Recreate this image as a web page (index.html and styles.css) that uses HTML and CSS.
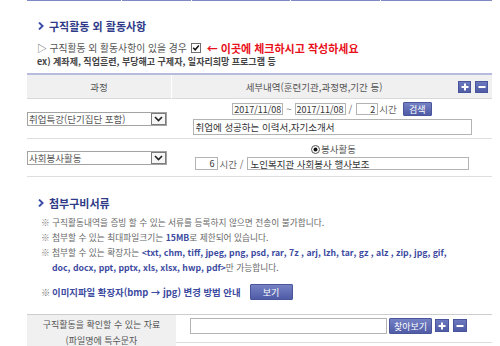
FILE: index.html
```html
<!DOCTYPE html>
<html lang="ko">
<head>
<meta charset="utf-8">
<title>구직활동 외 활동사항</title>
<link rel="stylesheet" href="styles.css">
</head>
<body>
<div class="page">
  <div class="prevbar"><span class="pb1"></span><span class="pb2"></span><span class="pb3"></span><span class="pb4"></span><span class="pb5"></span></div>

  <h2 class="title"><svg class="chev" width="6" height="8" viewBox="0 0 6 8"><path d="M1 0.6 L4.6 4 L1 7.4" fill="none" stroke="#3c4ea6" stroke-width="2"/></svg>구직활동 외 활동사항</h2>
  <p class="check-line">▷ 구직활동 외 활동사항이 있을 경우<svg class="cb" width="10" height="10" viewBox="0 0 10 10"><rect x="0.5" y="0.5" width="9" height="9" fill="#fff" stroke="#6f6f6f"/><path d="M2.2 4.8 L4.2 6.8 L7.8 2.6" fill="none" stroke="#111" stroke-width="1.5"/></svg><span class="red">← 이곳에 체크하시고 작성하세요</span></p>
  <p class="ex">ex) 계좌제, 직업훈련, 부당해고 구제자, 일자리희망 프로그램 등</p>

  <div class="act-table">
    <div class="th th-left">과정</div>
    <div class="th th-right">
      <span class="th-text">세부내역(훈련기관,과정명,기간 등)</span>
      <span class="pm">
        <span class="sq"><svg width="8" height="8" viewBox="0 0 8 8"><path d="M4 0.5 V7.5 M0.5 4 H7.5" stroke="#fff" stroke-width="2"/></svg></span>
        <span class="sq"><svg width="8" height="8" viewBox="0 0 8 8"><path d="M0.5 4 H7.5" stroke="#fff" stroke-width="2"/></svg></span>
      </span>
    </div>

    <div class="td td-left row1">
      <div class="sel"><span class="sel-text">취업특강(단기집단 포함)</span><span class="sel-btn"><svg width="9" height="6" viewBox="0 0 9 6"><path d="M1 1 L4.5 4.5 L8 1" fill="none" stroke="#222" stroke-width="1.6"/></svg></span></div>
    </div>
    <div class="td td-right row1">
      <div class="line-a">
        <input class="inp date" type="text" value="2017/11/08">
        <span class="tilde">~</span>
        <input class="inp date" type="text" value="2017/11/08">
        <span class="slash">/</span>
        <input class="inp hours" type="text" value="2">
        <span class="unit">시간</span>
        <span class="btn btn-search">검색</span>
      </div>
      <input class="inp wide" type="text" value="취업에 성공하는 이력서,자기소개서">
    </div>

    <div class="td td-left row2">
      <div class="sel"><span class="sel-text">사회봉사활동</span><span class="sel-btn"><svg width="9" height="6" viewBox="0 0 9 6"><path d="M1 1 L4.5 4.5 L8 1" fill="none" stroke="#222" stroke-width="1.6"/></svg></span></div>
    </div>
    <div class="td td-right row2">
      <div class="radio-line"><svg class="radio" width="9" height="9" viewBox="0 0 9 9"><circle cx="4.5" cy="4.5" r="4" fill="#fff" stroke="#555"/><circle cx="4.5" cy="4.5" r="2" fill="#111"/></svg><span>봉사활동</span></div>
      <div class="line-b">
        <input class="inp hrs2" type="text" value="6">
        <span class="unit2">시간 /</span>
        <input class="inp desc" type="text" value="노인복지관 사회봉사 행사보조">
      </div>
    </div>
  </div>

  <h2 class="title title2"><svg class="chev" width="6" height="8" viewBox="0 0 6 8"><path d="M1 0.6 L4.6 4 L1 7.4" fill="none" stroke="#3c4ea6" stroke-width="2"/></svg>첨부구비서류</h2>
  <ul class="notes">
    <li><span class="mark">※</span><span>구직활동내역을 증빙 할 수 있는 서류를 등록하지 않으면 전송이 불가합니다.</span></li>
    <li><span class="mark">※</span><span>첨부할 수 있는 최대파일크기는 <b class="blue">15MB</b>로 제한되어 있습니다.</span></li>
    <li><span class="mark">※</span><span>첨부할 수 있는 확장자는 <b class="blue">&lt;txt, chm, tiff, jpeg, png, psd, rar, 7z , arj, lzh, tar, gz , alz , zip, jpg, gif,</b></span></li>
    <li class="cont"><span><b class="blue">doc, docx, ppt, pptx, xls, xlsx, hwp, pdf&gt;</b>만 가능합니다.</span></li>
  </ul>
  <div class="guide"><span class="mark">※</span><b class="blue">이미지파일 확장자(bmp → jpg) 변경 방법 안내</b><span class="btn btn-view">보기</span></div>

  <div class="file-table">
    <div class="ft-left">구직활동을 확인할 수 있는 자료<br>(파일명에 특수문자</div>
    <div class="ft-right">
      <div class="ft-row">
        <input class="inp file" type="text" value="">
        <span class="btn btn-find">찾아보기</span>
        <span class="sq sq-big"><svg width="8" height="8" viewBox="0 0 8 8"><path d="M4 0.5 V7.5 M0.5 4 H7.5" stroke="#fff" stroke-width="2"/></svg></span>
        <span class="sq sq-big"><svg width="8" height="8" viewBox="0 0 8 8"><path d="M0.5 4 H7.5" stroke="#fff" stroke-width="2"/></svg></span>
      </div>
    </div>
  </div>
</div>
</body>
</html>
```
FILE: styles.css
```css
* { box-sizing: border-box; }
html, body { margin: 0; padding: 0; background: #fff; }
body {
  font-family: "Noto Sans CJK KR", "Noto Sans", sans-serif;
  font-size: 9px;
  color: #5a5a5a;
  overflow: hidden;
}
.page { margin-left: 27px; width: 465px; }

.prevbar { display: flex; gap: 1px; height: 1px; }
.prevbar span { height: 1px; background: #7f89c4; }
.pb1 { width: 94px; }
.pb2 { width: 69px; }
.pb3 { width: 98px; }
.pb4 { width: 89px; }
.pb5 { width: 111px; }

.title {
  margin: 18px 0 0;
  padding-left: 11px;
  height: 14px;
  line-height: 14px;
  font-size: 11px;
  font-weight: bold;
  color: #2f3b88;
  display: flex;
  align-items: center;
}
.chev { margin-right: 5px; }

.check-line {
  margin: 8px 0 0;
  padding-left: 10px;
  height: 14px;
  display: flex;
  align-items: center;
  font-size: 9.8px;
  color: #555;
  white-space: nowrap;
}
.cb { margin-left: 4px; }
.red { margin-left: 6px; color: #e8101a; font-weight: bold; font-size: 11px; }

.ex {
  margin: 0;
  padding-left: 10px;
  height: 14px;
  line-height: 14px;
  font-weight: bold;
  color: #444;
  white-space: nowrap;
}

.act-table {
  margin-top: 4px;
  border-top: 2px solid #b7bcdf;
  display: grid;
  grid-template-columns: 145px 1fr;
  font-size: 9.5px;
}
.th {
  height: 24px;
  background: #f0f0f0;
  border-bottom: 1px solid #d9d9d9;
  display: flex;
  align-items: center;
  color: #555;
}
.th-left { justify-content: center; border-right: 1px solid #fff; }
.th-right { padding-right: 4px; }
.th-text { flex: 1; text-align: center; padding-right: 2px; }
.pm { display: flex; gap: 4px; }
.sq {
  width: 13px;
  height: 12px;
  background: linear-gradient(#6c79bf, #4f5ca6);
  border: 1px solid #48549c;
  display: flex;
  align-items: center;
  justify-content: center;
}

.td { border-bottom: 1px solid #dedede; }
.row1 { height: 40px; }
.row2 { height: 38px; }
.td-left { display: flex; align-items: center; }
.sel {
  width: 140px;
  height: 14px;
  border: 1px solid #a3a3a3;
  display: flex;
  align-items: center;
  background: #fff;
}
.sel-text { flex: 1; padding-left: 1px; color: #555; white-space: nowrap; }
.sel-btn {
  width: 15px;
  height: 12px;
  border: 1px solid #7b7b7b;
  background: #f6f6f6;
  display: flex;
  align-items: center;
  justify-content: center;
}

.td-right { display: flex; flex-direction: column; align-items: center; }
.row1.td-right { padding-top: 3px; gap: 3px; }
.line-a { display: flex; align-items: center; height: 14px; }
.inp {
  font-family: inherit;
  font-size: 9px;
  color: #333;
  border: 1px solid #b3b3b3;
  background: #fff;
  padding: 0 2px;
  margin: 0;
  outline: none;
}
.date { width: 51px; height: 12px; padding: 0 1px; }
.tilde { margin: 0 3px 0 3px; color: #666; }
.slash { margin: 0 4px 0 3px; color: #666; }
.hours { width: 22px; height: 12px; text-align: right; }
.unit { margin-left: 1px; color: #666; }
.btn {
  display: inline-flex;
  align-items: center;
  justify-content: center;
  color: #fff;
  background: linear-gradient(#7581c4, #4f5ca6);
  border: 1px solid #4a5699;
  border-radius: 1px;
  font-size: 9px;
}
.btn-search { width: 29px; height: 14px; margin-left: 6px; }
.wide { width: 279px; height: 16px; font-size: 9.5px; }

.row2.td-right { padding-top: 4px; gap: 2px; }
.radio-line { display: flex; align-items: center; height: 12px; color: #555; align-self: flex-start; margin-left: 139px; }
.radio { margin-right: 1px; }
.line-b { display: flex; align-items: center; height: 13px; }
.hrs2 { width: 23px; height: 13px; text-align: right; }
.unit2 { margin: 0 4px 0 2px; color: #666; }
.desc { width: 222px; height: 13px; font-size: 9.5px; }

.title2 { margin-top: 19px; }
.notes { list-style: none; margin: 5px 0 0; padding: 0 0 0 14px; }
.notes li { display: flex; height: 15px; line-height: 15px; font-size: 8.7px; color: #666; white-space: nowrap; }
.notes li.cont { padding-left: 11px; }
.mark { width: 11px; flex: none; color: #777; }
.blue { color: #3c4a9f; font-weight: bold; }

.guide {
  margin-top: 9px;
  padding-left: 14px;
  height: 16px;
  display: flex;
  align-items: center;
  font-size: 9.4px;
  white-space: nowrap;
}
.btn-view { width: 43px; height: 16px; margin-left: 9px; }

.file-table {
  margin-top: 14px;
  border-top: 1px solid #cdcdcd;
  display: grid;
  grid-template-columns: 149px 1fr;
}
.ft-left {
  background: #f0f0f0;
  height: 40px;
  padding-top: 2px;
  line-height: 16px;
  text-align: center;
  color: #555;
}
.ft-row {
  height: 28px;
  border-bottom: 1px solid #dcdcdc;
  padding: 3px 0 0 14px;
  display: flex;
  align-items: flex-start;
}
.file { width: 197px; height: 16px; }
.btn-find { width: 43px; height: 16px; margin-left: 2px; }
.sq-big { width: 14px; height: 13px; margin-top: 1px; margin-left: 3px; }
.sq-big + .sq-big { margin-left: 4px; }
```
